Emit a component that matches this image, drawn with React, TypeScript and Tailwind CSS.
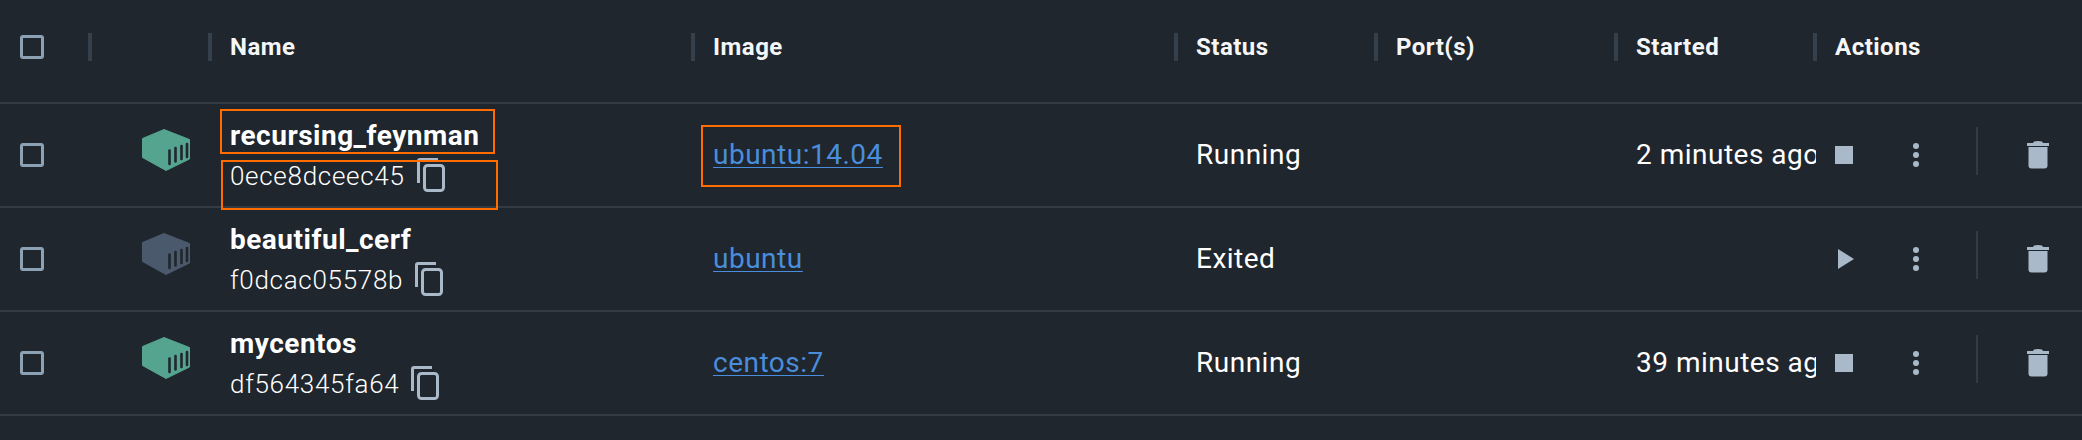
function Hex({ color }: { color: string }) {
  return (
    <svg width="48" height="42" viewBox="0 0 48 42" className="block">
      <path d="M22 0.5 L47.5 10.5 V30 L24 41.5 L0.5 28.5 V9.5 Z" fill={color} stroke={color} strokeWidth="1" strokeLinejoin="round" />
      <g stroke="#1f262d" strokeWidth="2.6" strokeLinecap="round">
        <line x1="27.5" y1="21.5" x2="27.5" y2="35" />
        <line x1="33.5" y1="19" x2="33.5" y2="32.5" />
        <line x1="39.5" y1="17" x2="39.5" y2="30" />
        <line x1="45" y1="15" x2="45" y2="28" />
      </g>
    </svg>
  );
}

function Copy() {
  return (
    <svg width="28" height="34" viewBox="0 0 28 34" className="block" fill="none" stroke="#a9b9c9">
      <path d="M1.5 25 V3 Q1.5 1.5 3 1.5 H21" strokeWidth="3" />
      <rect x="7.5" y="7.5" width="19" height="25" rx="3" strokeWidth="3" />
    </svg>
  );
}

function Trash() {
  return (
    <svg width="22" height="28" viewBox="0 0 22 28" className="block" fill="#a9b9c9">
      <path d="M7 0.5 Q11 -0.5 15 0.5 L16 2 H22 V5 H0 V2 H6 Z" />
      <path d="M1.5 6 H20.5 V24.5 Q20.5 27.5 17.5 27.5 H4.5 Q1.5 27.5 1.5 24.5 Z" />
    </svg>
  );
}

function Dots() {
  return (
    <svg width="8" height="26" viewBox="0 0 8 26" className="block" fill="#a9b9c9">
      <circle cx="4" cy="4" r="3" /><circle cx="4" cy="13" r="3" /><circle cx="4" cy="22" r="3" />
    </svg>
  );
}

function Check() {
  return <div className="w-6 h-6 rounded-[3px] border-[3px] border-[#8da1b5]" />;
}

const rows = [
  { name: "recursing_feynman", id: "0ece8dceec45", image: "ubuntu:14.04", status: "Running", started: "2 minutes ago", run: true },
  { name: "beautiful_cerf", id: "f0dcac05578b", image: "ubuntu", status: "Exited", started: "", run: false },
  { name: "mycentos", id: "df564345fa64", image: "centos:7", status: "Running", started: "39 minutes ago", run: true },
];

const cols = "grid grid-cols-[88px_120px_483px_483px_200px_240px_199px_269px]";

function Head({ label }: { label?: string }) {
  return (
    <div className="flex items-center h-full">
      <div className="w-1 h-7 bg-[#34404b]" />
      {label && <span className="ml-[18px] text-[24px] font-bold text-[#f4f6f8] tracking-[0.5px]">{label}</span>}
    </div>
  );
}

export default function App() {
  return (
    <div className="relative w-[2082px] h-[440px] overflow-hidden bg-[#1f262d] text-white font-['Roboto',sans-serif]">
      <div className={`${cols} h-[104px] pb-[8px] border-b-2 border-[#343b43]`}>
        <div className="flex items-center pl-5"><Check /></div>
        <Head />
        <Head label="Name" />
        <Head label="Image" />
        <Head label="Status" />
        <Head label="Port(s)" />
        <Head label="Started" />
        <Head label="Actions" />
      </div>
      {rows.map((r) => (
        <div key={r.id} className={`${cols} h-[104px] border-b-2 border-[#343b43] items-center`}>
          <div className="pl-5"><Check /></div>
          <div className="pl-[54px] mb-[10px]"><Hex color={r.run ? "#55a48f" : "#4a5a6c"} /></div>
          <div className="pl-[22px] pt-[3px]">
            <div className="text-[28px] leading-[38px] font-bold tracking-[0.5px]">{r.name}</div>
            <div className="mt-px flex items-start text-[26px] leading-[40px] font-[350] tracking-[0.7px]">
              <span>{r.id}</span>
              <span className="ml-[12px] mt-[2px]"><Copy /></span>
            </div>
          </div>
          <div className="pl-[22px] text-[28px] tracking-[0.5px] text-[#4a8ddc] underline underline-offset-[3px] decoration-1"><a>{r.image}</a></div>
          <div className="pl-[22px] text-[28px] tracking-[0.5px]">{r.status}</div>
          <div />
          <div className="pl-[22px] -mr-[3px] text-[28px] tracking-[0.5px] whitespace-nowrap overflow-hidden">{r.started}</div>
          <div className="flex items-center h-full">
            <div className="w-[18px] h-[20px] ml-[22px] flex items-center shrink-0">
              {r.run ? <div className="w-[18px] h-[18px] bg-[#a9b9c9]" /> : <div className="ml-[3px] w-0 h-0 border-y-[10px] border-y-transparent border-l-[16px] border-l-[#a9b9c9]" />}
            </div>
            <div className="ml-[59px]"><Dots /></div>
            <div className="ml-[56px] mb-[8px] w-[2px] h-12 bg-[#343b43]" />
            <div className="ml-[49px]"><Trash /></div>
          </div>
        </div>
      ))}
      <div className="absolute left-[220px] top-[109px] w-[275px] h-[45px] border-2 border-[#ff6d00]" />
      <div className="absolute left-[221px] top-[160px] w-[277px] h-[50px] border-2 border-[#ff6d00]" />
      <div className="absolute left-[701px] top-[125px] w-[200px] h-[62px] border-2 border-[#ff6d00]" />
    </div>
  );
}
